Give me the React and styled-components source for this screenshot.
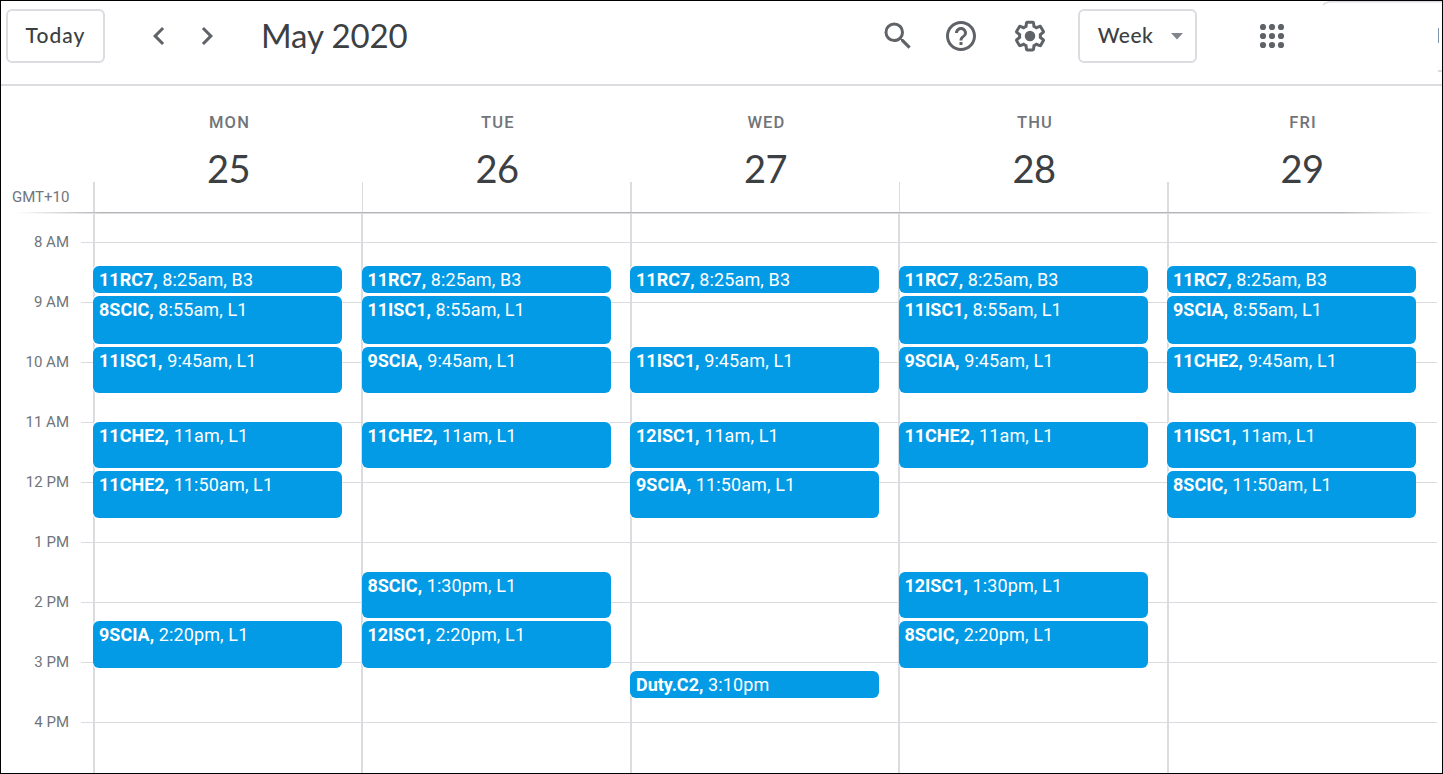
import React from "react";
import styled, { createGlobalStyle } from "styled-components";
import {
  MdSearch,
  MdHelpOutline,
  MdChevronLeft,
  MdChevronRight,
} from "react-icons/md";

const GlobalStyle = createGlobalStyle`
  * {
    box-sizing: border-box;
  }
  body {
    margin: 0;
    background: #fff;
    font-family: Roboto, "Liberation Sans", sans-serif;
  }
`;

const Frame = styled.div`
  width: 1443px;
  height: 774px;
  border: 1px solid #000;
  overflow: hidden;
  display: flex;
  flex-direction: column;
  color: #3c4043;
`;

const TopBar = styled.header`
  height: 85px;
  flex: none;
  display: flex;
  align-items: flex-start;
  border-bottom: 2px solid #dadce0;
  padding-left: 5px;
`;

const OutlineButton = styled.button`
  width: ${(props) => props.$width}px;
  height: 54px;
  margin-top: 8px;
  padding: 0 0 3px ${(props) => props.$indent || 0}px;
  flex: none;
  display: flex;
  align-items: center;
  justify-content: center;
  gap: 18px;
  background: #fff;
  border: 2px solid #dadce0;
  border-radius: 6px;
  color: #3c4043;
  font-family: Lato, sans-serif;
  font-size: 21px;
  font-weight: 500;
  letter-spacing: ${(props) => props.$spacing}px;
  svg {
    margin-top: 4px;
  }
`;

const Arrows = styled.div`
  display: flex;
  align-items: center;
  gap: 12px;
  height: 70px;
  margin-left: 36px;
  font-size: 36px;
  color: #5f6368;
`;

const Title = styled.h1`
  margin: 0 0 0 36px;
  width: 619px;
  line-height: 68px;
  font-family: Lato, sans-serif;
  font-size: 33px;
  font-weight: 400;
  letter-spacing: -0.1px;
`;

const Actions = styled.div`
  display: flex;
  align-items: center;
  gap: 33px;
  height: 70px;
  margin-right: 30px;
  font-size: 36px;
  color: #5f6368;
  svg:first-child {
    margin-right: -6px;
  }
`;

const AppsIcon = styled.svg`
  margin: 23px 0 0 62px;
  flex: none;
`;

const AccountEdge = styled.svg`
  margin-left: auto;
  flex: none;
`;

const DayHeader = styled.div`
  display: grid;
  grid-template-columns: 92px 268px 269px 268px 269px 1fr;
  height: 126px;
  flex: none;
`;

const Zone = styled.div`
  padding: 101px 0 0 11px;
  font-size: 15px;
  line-height: 20px;
  color: #70757a;
`;

const DayCell = styled.div`
  display: flex;
  flex-direction: column;
  align-items: center;
  padding: 27px 0 0 4px;
  background: linear-gradient(#dadce0, #dadce0)
    ${(props) => (props.$shift ? "1px 96px / 1px 30px" : "0 96px / 2px 30px")}
    no-repeat;
  &:last-child {
    padding-right: 8px;
  }
`;

const DayName = styled.div`
  font-size: 16.5px;
  font-weight: 500;
  line-height: 20px;
  letter-spacing: 1.2px;
  text-indent: 1px;
  color: #70757a;
`;

const DayNumber = styled.div`
  margin: 10px 1px 0 0;
  font-family: Lato, sans-serif;
  font-size: 38px;
  line-height: 50px;
  letter-spacing: -0.5px;
`;

const Shade = styled.div`
  height: 2px;
  flex: none;
  background: linear-gradient(#b5b5b9 50%, #dcdcde 50%);
  mask-image: linear-gradient(90deg, transparent 1%, #000 7%, #000 93%, transparent 99.5%);
`;

const Body = styled.div`
  flex: 1;
  display: grid;
  grid-template-columns: 100%;
  min-height: 0;
`;

const Hours = styled.div`
  grid-area: 1 / 1;
  padding-top: 18px;
  margin-right: 5px;
`;

const Hour = styled.div`
  height: 60px;
  display: grid;
  grid-template-columns: 68px 1fr;
  gap: 12px;
  font-size: 15px;
  line-height: 20px;
  text-align: right;
  color: #70757a;
`;

const HourLine = styled.div`
  height: 1px;
  margin-top: 10px;
  background: #dadce0;
`;

const Columns = styled.div`
  grid-area: 1 / 1;
  display: grid;
  grid-template-columns: 268px 269px 268px 269px 1fr;
  margin-left: 92px;
`;

const Column = styled.div`
  display: grid;
  grid-template-columns: 249px;
  grid-template-rows: repeat(559, 1px);
  padding-left: ${(props) => (props.$shift ? 1 : 0)}px;
  background: linear-gradient(#dadce0, #dadce0) 0 0 / 2px 100% no-repeat;
`;

const EventCard = styled.div`
  grid-column: 1;
  grid-row: ${(props) => props.$top} / span ${(props) => props.$height};
  padding-left: ${(props) => (props.$shift ? 5.4 : 6)}px;
  border-radius: 6px;
  background: #039be5;
  box-shadow: 0 1.5px 0 #fff, 0 -1.5px 0 #fff;
  color: #fff;
  font-size: 18px;
  line-height: 27px;
  letter-spacing: 0.12px;
  white-space: nowrap;
  overflow: hidden;
`;

const EventName = styled.span`
  font-weight: 700;
  letter-spacing: 0;
`;

// pixel row of each slot, counted from the top of the scroll area
const slots = {
  "8:25am": [53, 27],
  "8:55am": [83, 48],
  "9:45am": [134, 46],
  "11am": [209, 46],
  "11:50am": [258, 47],
  "1:30pm": [359, 46],
  "2:20pm": [408, 47],
  "3:10pm": [458, 27],
};

const days = [
  {
    name: "MON",
    date: 25,
    events: [
      ["11RC7", "8:25am", "B3"],
      ["8SCIC", "8:55am", "L1"],
      ["11ISC1", "9:45am", "L1"],
      ["11CHE2", "11am", "L1"],
      ["11CHE2", "11:50am", "L1"],
      ["9SCIA", "2:20pm", "L1"],
    ],
  },
  {
    name: "TUE",
    date: 26,
    events: [
      ["11RC7", "8:25am", "B3"],
      ["11ISC1", "8:55am", "L1"],
      ["9SCIA", "9:45am", "L1"],
      ["11CHE2", "11am", "L1"],
      ["8SCIC", "1:30pm", "L1"],
      ["12ISC1", "2:20pm", "L1"],
    ],
  },
  {
    name: "WED",
    date: 27,
    events: [
      ["11RC7", "8:25am", "B3"],
      ["11ISC1", "9:45am", "L1"],
      ["12ISC1", "11am", "L1"],
      ["9SCIA", "11:50am", "L1"],
      ["Duty.C2", "3:10pm"],
    ],
  },
  {
    name: "THU",
    date: 28,
    events: [
      ["11RC7", "8:25am", "B3"],
      ["11ISC1", "8:55am", "L1"],
      ["9SCIA", "9:45am", "L1"],
      ["11CHE2", "11am", "L1"],
      ["12ISC1", "1:30pm", "L1"],
      ["8SCIC", "2:20pm", "L1"],
    ],
  },
  {
    name: "FRI",
    date: 29,
    events: [
      ["11RC7", "8:25am", "B3"],
      ["9SCIA", "8:55am", "L1"],
      ["11CHE2", "9:45am", "L1"],
      ["11ISC1", "11am", "L1"],
      ["8SCIC", "11:50am", "L1"],
    ],
  },
];

const hours = ["8 AM", "9 AM", "10 AM", "11 AM", "12 PM", "1 PM", "2 PM", "3 PM", "4 PM"];

const dots = [4, 13, 22];

const GearIcon = () => (
  <svg width="36" height="36" viewBox="0 0 24 24" fill="currentColor">
    <path d="M13.85 22.25h-3.7c-.74 0-1.36-.54-1.45-1.27l-.27-1.89c-.27-.14-.53-.29-.79-.46l-1.8.72c-.7.26-1.47-.03-1.81-.65L2.2 15.53c-.35-.66-.2-1.44.36-1.88l1.53-1.19c-.01-.15-.02-.3-.02-.46 0-.15.01-.31.02-.46l-1.52-1.19c-.59-.45-.74-1.26-.37-1.88l1.85-3.19c.34-.62 1.11-.9 1.79-.63l1.81.73c.26-.17.52-.32.78-.46l.27-1.91c.09-.7.71-1.25 1.44-1.25h3.7c.74 0 1.36.54 1.45 1.27l.27 1.89c.27.14.53.29.79.46l1.8-.72c.71-.26 1.48.03 1.82.65l1.84 3.18c.36.66.2 1.44-.36 1.88l-1.52 1.19c.01.15.02.3.02.46s-.01.31-.02.46l1.52 1.19c.56.45.72 1.23.37 1.86l-1.86 3.22c-.34.62-1.11.9-1.8.63l-1.8-.72c-.26.17-.52.32-.78.46l-.27 1.91c-.1.68-.72 1.22-1.46 1.22zm-3.23-2h2.76l.37-2.55.53-.22c.44-.18.88-.44 1.34-.78l.45-.34 2.38.96 1.38-2.4-2.03-1.58.07-.56c.03-.26.06-.51.06-.78s-.03-.53-.06-.78l-.07-.56 2.03-1.58-1.39-2.4-2.39.96-.45-.35c-.42-.32-.87-.58-1.33-.77l-.52-.22-.37-2.55h-2.76l-.37 2.55-.53.21c-.44.19-.88.44-1.34.79l-.45.33-2.38-.95-1.39 2.39 2.03 1.58-.07.56a7 7 0 0 0-.06.79c0 .26.02.53.06.78l.07.56-2.03 1.58 1.38 2.4 2.39-.96.45.35c.43.33.86.58 1.33.77l.53.22.38 2.55z" />
    <circle cx="12" cy="12" r="3.5" />
  </svg>
);

const App = () => {
  return (
    <>
      <GlobalStyle />
      <Frame>
        <TopBar>
          <OutlineButton $width={99} $spacing={1}>
            Today
          </OutlineButton>
          <Arrows>
            <MdChevronLeft />
            <MdChevronRight />
          </Arrows>
          <Title>May 2020</Title>
          <Actions>
            <MdSearch />
            <MdHelpOutline />
            <GearIcon />
          </Actions>
          <OutlineButton $width={119} $spacing={0.5} $indent={6}>
            Week
            <svg width="12" height="7" viewBox="0 0 12 7">
              <path d="M0 0h12L6 6.5z" fill="#80868b" />
            </svg>
          </OutlineButton>
          <AppsIcon width="26" height="26" viewBox="0 0 26 26" fill="#5f6368">
            {dots.map((y) => dots.map((x) => <circle key={`${x}-${y}`} cx={x} cy={y - 1} r="3.1" />))}
          </AppsIcon>
          {/* left edge of the account chip */}
          <AccountEdge width="121" height="83" viewBox="0 0 121 83">
            <path d="M2 4Q5 .7 10 .7h111" fill="none" stroke="#dadce0" strokeWidth="1.4" />
            <path d="M117.5 27v15" stroke="#8094b0" />
            <path d="M117 70h4" stroke="#dadce0" strokeWidth="2" />
          </AccountEdge>
        </TopBar>
        <DayHeader>
          <Zone>GMT+10</Zone>
          {days.map((day, index) => (
            <DayCell key={day.name} $shift={index % 2 === 1}>
              <DayName>{day.name}</DayName>
              <DayNumber>{day.date}</DayNumber>
            </DayCell>
          ))}
        </DayHeader>
        <Shade />
        <Body>
          <Hours>
            {hours.map((hour) => (
              <Hour key={hour}>
                {hour}
                <HourLine />
              </Hour>
            ))}
          </Hours>
          <Columns>
            {days.map((day, index) => (
              <Column key={day.name} $shift={index % 2 === 1}>
                {day.events.map(([name, time, room]) => (
                  <EventCard
                    key={time}
                    $top={slots[time][0]}
                    $height={slots[time][1]}
                    $shift={index % 2 === 1}
                  >
                    <EventName>{name},</EventName> {time}
                    {room && `, ${room}`}
                  </EventCard>
                ))}
              </Column>
            ))}
          </Columns>
        </Body>
      </Frame>
    </>
  );
};

export default App;
